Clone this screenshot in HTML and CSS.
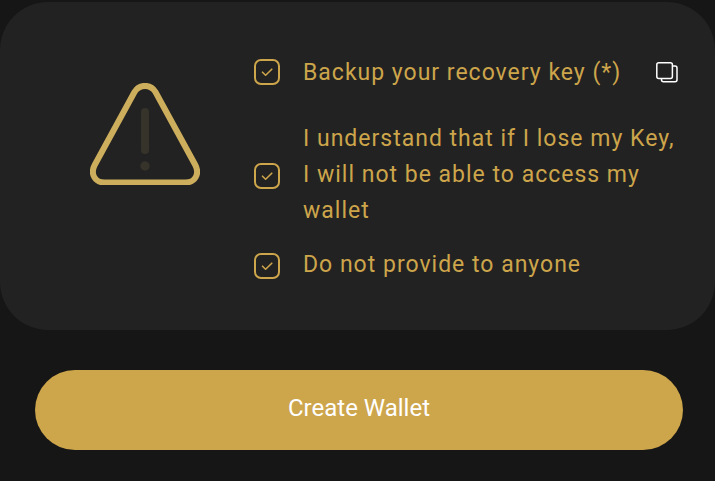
FILE: index.html
```html
<!DOCTYPE html>
<html lang="en">
<head>
  <meta charset="UTF-8">
  <meta name="viewport" content="width=device-width, initial-scale=1">
  <title>Create Wallet</title>
  <link rel="stylesheet" href="styles.css">
</head>
<body>
  <form class="wallet">
    <section class="card">
      <svg class="warning" viewBox="0 0 110 102" aria-hidden="true">
        <path class="warning-outline" d="M44.500 9L4.700 82C0 91 5 99.500 14.500 99.500H95.500C105 99.500 110 91 105.300 82L65.500 9C63 4.800 59.500 2.900 55 2.900C50.500 2.900 47 4.800 44.500 9Z"/>
        <path class="warning-bar" d="M55 29V67"/>
        <circle class="warning-dot" cx="55" cy="83" r="4.7"/>
      </svg>
      <ul class="terms">
        <li class="term">
          <span class="tick">
            <input type="checkbox" id="backup" checked>
            <svg viewBox="0 0 26 26" aria-hidden="true"><path d="M8.5 13.2L11.6 16.2L17.8 10.2"/></svg>
          </span>
          <label for="backup">Backup your recovery key (*)</label>
          <button type="button" class="copy" aria-label="Copy recovery key">
            <svg viewBox="0 0 24 24" aria-hidden="true">
              <rect x="1.8" y="2.8" width="15.6" height="15.6" rx="2"/>
              <path d="M17.6 6H20Q22 6 22 8V19.800Q22 21.800 20 21.800H8.500Q6.500 21.800 6.500 19.800V18.600"/>
            </svg>
          </button>
        </li>
        <li class="term term-raised">
          <span class="tick">
            <input type="checkbox" id="understand" checked>
            <svg viewBox="0 0 26 26" aria-hidden="true"><path d="M8.5 13.2L11.6 16.2L17.8 10.2"/></svg>
          </span>
          <label for="understand">I understand that if I lose my Key, I will not be able to access my wallet</label>
        </li>
        <li class="term term-raised">
          <span class="tick">
            <input type="checkbox" id="private" checked>
            <svg viewBox="0 0 26 26" aria-hidden="true"><path d="M8.5 13.2L11.6 16.2L17.8 10.2"/></svg>
          </span>
          <label for="private">Do not provide to anyone</label>
        </li>
      </ul>
    </section>
    <button type="submit" class="create">Create Wallet</button>
  </form>
</body>
</html>
```
FILE: styles.css
```css
* {
  box-sizing: border-box;
}

body {
  margin: 0;
  background: #161616;
  color: #cda54b;
  font-family: Roboto, "Liberation Sans", sans-serif;
  font-size: 24px;
  line-height: 36px;
}

.wallet {
  display: flex;
  flex-direction: column;
  gap: 40px;
  padding-top: 2px;
}

.card {
  display: flex;
  align-items: flex-start;
  gap: 54px;
  padding: 51px 36px 43px 90px;
  background: #222;
  border-radius: 48px;
}

.warning {
  flex: none;
  width: 110px;
  margin-top: 30px;
  fill: none;
  stroke-linecap: round;
}

.warning-outline {
  stroke: #cdae5d;
  stroke-width: 6;
}

.warning-bar {
  stroke: #36332a;
  stroke-width: 8;
}

.warning-dot {
  fill: #36332a;
}

.terms {
  flex: 1;
  display: flex;
  flex-direction: column;
  gap: 12px;
  margin: 0;
  padding: 0;
  list-style: none;
}

.term {
  display: flex;
  align-items: center;
  gap: 23px;
}

.term:first-child {
  margin-bottom: 16px;
}

.term label {
  flex: 1;
  padding-top: 2px;
  font-size: 23px;
  letter-spacing: 1px;
}

.term-raised label {
  padding-bottom: 4px;
}

.tick {
  display: grid;
  flex: none;
  width: 26px;
  height: 26px;
}

.tick input,
.tick svg {
  grid-area: 1 / 1;
  width: 26px;
  height: 26px;
  margin: 0;
}

.tick input {
  appearance: none;
  border: 2px solid #cda54b;
  border-radius: 7px;
}

.tick svg {
  visibility: hidden;
  pointer-events: none;
  fill: none;
  stroke: #cda54b;
  stroke-width: 1.6;
  stroke-linecap: round;
  stroke-linejoin: round;
}

.tick input:checked + svg {
  visibility: visible;
}

.copy {
  flex: none;
  width: 24px;
  height: 24px;
  padding: 0;
  border: 0;
  background: none;
}

.copy svg {
  display: block;
  fill: none;
  stroke: #fff;
  stroke-width: 1.5;
}

.create {
  height: 80px;
  margin: 0 32px 0 35px;
  padding: 0 0 4px;
  border: 0;
  border-radius: 40px;
  background: #cda54b;
  color: #fff;
  font: inherit;
}
```
